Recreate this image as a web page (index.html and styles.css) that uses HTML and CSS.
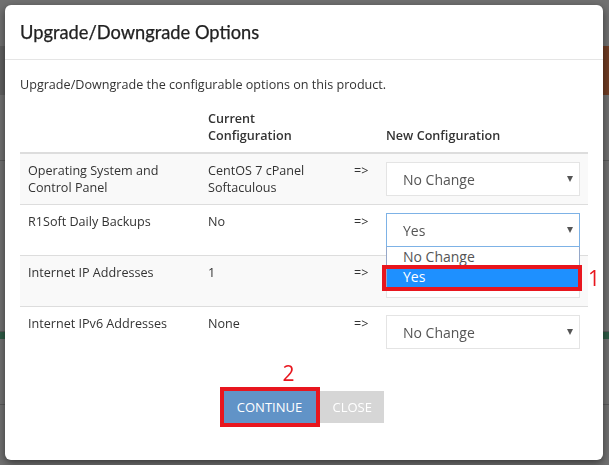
FILE: index.html
```html
<!DOCTYPE html>
<html lang="en">
<head>
    <meta charset="UTF-8">
    <meta name="viewport" content="width=device-width, initial-scale=1.0">
    <title>Upgrade/Downgrade Options</title>
    <link rel="stylesheet" href="styles.css">
</head>
<body>
    <!-- Page behind the modal -->
    <div class="page">
        <div class="page-top"></div>
        <div class="page-band"><span class="band-accent"></span></div>
        <div class="page-section"></div>
        <div class="page-section tall"></div>
        <div class="page-green"></div>
        <div class="page-section"></div>
    </div>

    <div class="backdrop">
        <div class="modal">
            <div class="modal-header">
                <h4 class="modal-title">Upgrade/Downgrade Options</h4>
            </div>
            <div class="modal-body">
                <p class="intro">Upgrade/Downgrade the configurable options on this product.</p>

                <table class="options-table">
                    <thead>
                        <tr>
                            <th class="col-name"></th>
                            <th class="col-current">Current Configuration</th>
                            <th class="col-arrow"></th>
                            <th class="col-new">New Configuration</th>
                        </tr>
                    </thead>
                    <tbody>
                        <tr>
                            <td>Operating System and Control Panel</td>
                            <td>CentOS 7 cPanel Softaculous</td>
                            <td>=&gt;</td>
                            <td>
                                <div class="select-wrap">
                                    <select><option>No Change</option></select>
                                </div>
                            </td>
                        </tr>
                        <tr>
                            <td>R1Soft Daily Backups</td>
                            <td>No</td>
                            <td>=&gt;</td>
                            <td>
                                <div class="select-wrap open">
                                    <select class="focused"><option>Yes</option></select>
                                    <ul class="dropdown-list">
                                        <li>No Change</li>
                                        <li class="active">Yes</li>
                                    </ul>
                                    <span class="mark-box"></span>
                                    <span class="mark-num one">1</span>
                                </div>
                            </td>
                        </tr>
                        <tr>
                            <td>Internet IP Addresses</td>
                            <td>1</td>
                            <td>=&gt;</td>
                            <td>
                                <div class="select-wrap">
                                    <select><option>No Change</option></select>
                                </div>
                            </td>
                        </tr>
                        <tr>
                            <td>Internet IPv6 Addresses</td>
                            <td>None</td>
                            <td>=&gt;</td>
                            <td>
                                <div class="select-wrap">
                                    <select><option>No Change</option></select>
                                </div>
                            </td>
                        </tr>
                    </tbody>
                </table>

                <div class="actions">
                    <span class="mark-wrap">
                        <span class="mark-num two">2</span>
                        <button class="btn btn-primary">Continue</button>
                    </span><button class="btn btn-default">Close</button>
                </div>
            </div>
        </div>
    </div>
</body>
</html>
```

FILE: styles.css
```css
body {
    margin: 0;
    font-family: "Open Sans", "Liberation Sans", sans-serif;
    font-size: 12.6px;
    color: #333;
    background: #fff;
}

/* Page behind the overlay */
.page {
    width: 609px;
}
.page-top {
    height: 46px;
    background: #fff;
}
.page-band {
    height: 49px;
    background: #d9d9d9;
    display: flex;
    justify-content: flex-end;
}
.band-accent {
    width: 10px;
    background: #ff8a52;
}
.page-section {
    height: 65px;
    border-bottom: 1px solid #ccc;
    background: #fff;
}
.page-section.tall {
    height: 170px;
}
.page-green {
    height: 7px;
    background: #6ad09f;
}

/* Modal */
.backdrop {
    position: fixed;
    top: 0;
    left: 0;
    right: 0;
    bottom: 0;
    background: rgba(0, 0, 0, 0.56);
    padding-top: 5px;
}
.modal {
    width: 598px;
    margin-left: 5px;
    background: #fff;
    border-radius: 6px;
    box-shadow: 0 3px 9px rgba(0, 0, 0, 0.5);
}
.modal-header {
    height: 54px;
    padding: 0 15px;
    border-bottom: 1px solid #e5e5e5;
    display: flex;
    align-items: center;
}
.modal-title {
    margin: 0;
    font-family: Lato, "Open Sans", sans-serif;
    font-size: 18.3px;
    font-weight: 400;
    color: #222;
    -webkit-text-stroke: 0.25px #222;
}
.modal-body {
    padding: 16px 15px 33px;
}
.intro {
    margin: 0 0 8px;
    line-height: 18px;
}

/* Options table */
.options-table {
    width: 100%;
    border-collapse: collapse;
    line-height: 17px;
}
.options-table th,
.options-table td {
    padding: 8px;
    text-align: left;
    vertical-align: top;
}
.options-table th {
    font-weight: 600;
    vertical-align: bottom;
    border-bottom: 2px solid #ddd;
}
.options-table td {
    border-top: 1px solid #ddd;
}
.options-table tbody tr:nth-child(odd) {
    background: #f9f9f9;
}
.col-name { width: 164px; }
.col-current { width: 130px; }
.col-arrow { width: 16px; }

/* Selects */
.select-wrap {
    position: relative;
}
.select-wrap::after {
    content: "";
    position: absolute;
    right: 7px;
    top: 14px;
    border-left: 3px solid transparent;
    border-right: 3px solid transparent;
    border-top: 6px solid #555;
}
.select-wrap select {
    display: block;
    width: 100%;
    height: 34px;
    padding: 0 0 0 16px;
    border: 1px solid #e4e4e4;
    border-radius: 0;
    background: #fff;
    font-family: "Open Sans", sans-serif;
    font-size: 14px;
    color: #555;
    -webkit-appearance: none;
    appearance: none;
}
.select-wrap select.focused {
    border-color: #7db2e6;
}
.select-wrap.open {
    z-index: 2;
}
.dropdown-list {
    position: absolute;
    left: 0;
    right: 0;
    top: 34px;
    margin: 0;
    padding: 0;
    list-style: none;
    background: #fff;
    border: 1px solid #95a8c9;
    border-top: 0;
    font-size: 14px;
    color: #555;
}
.dropdown-list li {
    height: 20px;
    line-height: 20px;
    padding-left: 16px;
}
.dropdown-list li.active {
    background: #1e90ff;
    color: #fff;
}

/* Red annotations */
.mark-box {
    position: absolute;
    left: -4px;
    top: 52px;
    width: 192px;
    height: 18px;
    border: 4px solid #e8161e;
}
.mark-num {
    position: absolute;
    font-family: "Open Sans", sans-serif;
    font-size: 21px;
    line-height: 22px;
    color: #e8161e;
}
.mark-num.one {
    left: 202px;
    top: 54px;
}
.mark-num.two {
    left: 59px;
    top: -29px;
}

/* Buttons */
.actions {
    margin-top: 30px;
    text-align: center;
    font-size: 0;
    padding-right: 5px;
}
.mark-wrap {
    position: relative;
    display: inline-block;
    border: 4px solid #e8161e;
    vertical-align: top;
}
.btn {
    display: inline-block;
    vertical-align: top;
    height: 32px;
    padding: 0 13px;
    border: 0;
    border-radius: 0;
    font-family: "Open Sans", sans-serif;
    font-size: 13px;
    text-transform: uppercase;
    color: #fff;
    cursor: pointer;
}
.btn-primary {
    width: 92px;
    background: #6193c7;
}
.btn-default {
    width: 64px;
    margin-top: 4px;
    background: #d6d6d6;
}
```
